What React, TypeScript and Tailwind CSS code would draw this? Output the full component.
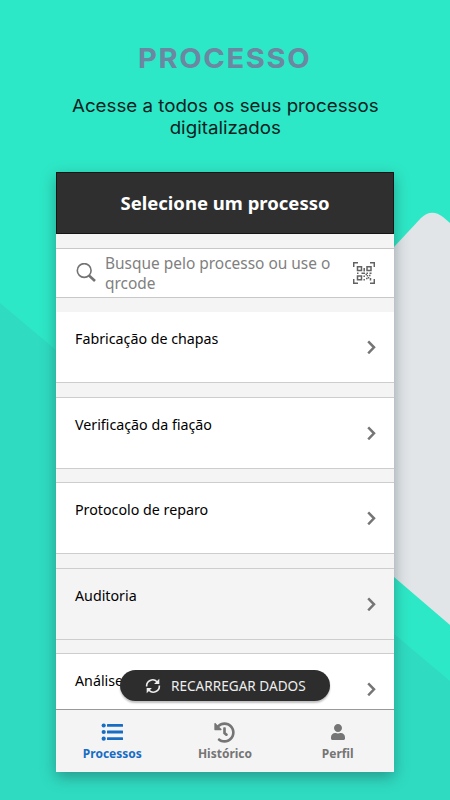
import { FC } from 'react';
import { FaHistory, FaUser } from 'react-icons/fa';
import { clsx } from 'clsx';

interface ProcessItem
{
    name: string;
    className: string;
}

const PROCESSES: ProcessItem[] = [
    { name: 'Fabricação de chapas', className: 'h-[71px] bg-white border-b' },
    { name: 'Verificação da fiação', className: 'h-[72px] bg-white border-y' },
    { name: 'Protocolo de reparo', className: 'h-[72px] bg-white border-y' },
    { name: 'Auditoria', className: 'h-[72px] bg-[#f4f4f4] border-y' },
    { name: 'Análise', className: 'h-[72px] bg-white border-y' }
];

const Backdrop: FC<{}> = () => (
    <svg className="absolute inset-0" width="450" height="800" viewBox="0 0 450 800">
        <rect width="450" height="800" fill="#2de8c6" />
        <path d="M0 303L450 681V800H0Z" fill="#2fdcc1" />
        <path d="M380 262L421 218Q431.500 208 443 217L450 223V625L380 565Z" fill="#e1e5e8" />
    </svg>
);

const SearchIcon: FC<{}> = () => (
    <svg className="shrink-0" width="20" height="20" viewBox="0 0 20 20" fill="none" stroke="#737373">
        <circle cx="8.200" cy="7.500" r="6.900" strokeWidth="1.600" />
        <path d="M12.700 12.200L19 18" strokeWidth="2.600" />
    </svg>
);

const QrCodeIcon: FC<{}> = () => (
    <svg className="shrink-0" width="22" height="22" viewBox="0 0 22 22" fill="none" stroke="#626262" strokeWidth="1.500">
        <path d="M.7 5V.7H5M17 .7H21.300V5M21.300 17V21.300H17M5 21.300H.7V17" />
        <path d="M4.500 4.700H8.500V8.500H4.500ZM14 4.700H18V8.500H14ZM4.500 14H8.500V17.800H4.500Z" />
        <path d="M11.200 6V9.500M4 11.200H5.500M8.500 11.200H12M13.500 11.200H15M16.500 11.200H18.500M11.200 13.500V15M12.500 12.500H14M14.500 13V14.500M16 13.500H17.500M11.200 17V18.500M13 16.500H14.500M15.500 15V16.500M17.500 16V18.500" />
    </svg>
);

const ChevronIcon: FC<{}> = () => (
    <svg width="9" height="14" viewBox="0 0 9 14" fill="none" stroke="#757575" strokeWidth="2.500">
        <path d="M1.200 1.300L7 7.300L1.200 13.300" />
    </svg>
);

const ReloadIcon: FC<{}> = () => (
    <svg width="16" height="16" viewBox="0 0 16 16" fill="none" stroke="#eee" strokeWidth="1.600">
        <path d="M1.700 8.500A6 6 0 0 1 12 3.700" />
        <path d="M14.300 7.500A6 6 0 0 1 4 12.300" />
        <path d="M14.300 .7V5.900H9.100Z" fill="#eee" stroke="none" />
        <path d="M1.700 15.300V10.100H6.900Z" fill="#eee" stroke="none" />
    </svg>
);

const ListIcon: FC<{}> = () => (
    <svg width="22" height="18" viewBox="0 0 22 18" fill="#176cc4">
        <circle cx="2.700" cy="2.500" r="2.100" />
        <circle cx="2.700" cy="9" r="2.100" />
        <circle cx="2.700" cy="15.700" r="2.100" />
        <rect x="6" y="1" width="16" height="2.800" rx=".5" />
        <rect x="6" y="7.600" width="16" height="2.800" rx=".5" />
        <rect x="6" y="14.300" width="16" height="2.800" rx=".5" />
    </svg>
);

const ProcessRow: FC<{ item: ProcessItem }> = ({ item }) => (
    <div className={ clsx('flex shrink-0 items-center justify-between border-[#cdcdcd] pl-[19px] pr-[18px]', item.className) }>
        <span className="mb-4 text-[14.250px] leading-5 text-black">{ item.name }</span>
        <ChevronIcon />
    </div>
);

export default function App()
{
    return (
        <div className="relative h-[800px] w-[450px] overflow-hidden">
            <Backdrop />
            <div className="relative flex flex-col items-center">
                <header className="flex h-[172px] flex-col items-center pt-[41px] text-center font-['Inter',sans-serif]">
                    <h1 className="scale-x-106 text-[27.500px] leading-[34px] font-bold tracking-[1.500px] text-[#6c87a1]">PROCESSO</h1>
                    <p className="mt-5 scale-x-107 text-[17.500px] leading-[22px] text-[#0b211f]">
                        Acesse a todos os seus processos<br />digitalizados
                    </p>
                </header>
                <main className="relative flex h-[600px] w-[338px] flex-col overflow-hidden bg-[#f4f4f4] font-['Noto_Sans',sans-serif] shadow-[0_5px_14px_rgba(30,50,60,0.400)]">
                    <div className="flex h-[62px] shrink-0 items-center justify-center border border-[#151515] bg-[#2f2f2f] text-[18.500px] font-bold text-white">
                        Selecione um processo
                    </div>
                    <div className="mt-[14px] flex h-[50px] shrink-0 items-center border-y border-[#c8c8c8] bg-white pl-5 pr-[19px]">
                        <SearchIcon />
                        <span className="ml-[9px] w-[240px] text-[15.450px] leading-5 text-[#808080]">Busque pelo processo ou use o qrcode</span>
                        <span className="ml-auto"><QrCodeIcon /></span>
                    </div>
                    <div className="mt-[14px] flex min-h-0 flex-1 flex-col gap-[13.500px] overflow-hidden">
                        { PROCESSES.map(item => <ProcessRow key={ item.name } item={ item } />) }
                    </div>
                    <button className="absolute top-[498px] left-16 flex h-[31px] w-[210px] items-center rounded-full bg-[#2d2d2d] pl-[25px] text-[13.600px] text-[#eee] shadow-[0_2px_2px_rgba(0,0,0,0.250)]">
                        <ReloadIcon />
                        <span className="mt-px ml-[10px] whitespace-nowrap">RECARREGAR DADOS</span>
                    </button>
                    <nav className="grid h-[63px] shrink-0 grid-cols-3 border-t border-[#999] bg-[#f4f4f4] text-[12px] leading-4 font-bold text-[#757575]">
                        <div className="flex flex-col items-center pt-[13px] text-[#176cc4]">
                            <div className="flex h-[23px]"><ListIcon /></div>
                            Processos
                        </div>
                        <div className="flex flex-col items-center pt-3">
                            <div className="flex h-6"><FaHistory size={ 21 } /></div>
                            Histórico
                        </div>
                        <div className="flex flex-col items-center pt-3.5">
                            <div className="flex h-[22px]"><FaUser size={ 16 } /></div>
                            Perfil
                        </div>
                    </nav>
                </main>
            </div>
        </div>
    );
}
